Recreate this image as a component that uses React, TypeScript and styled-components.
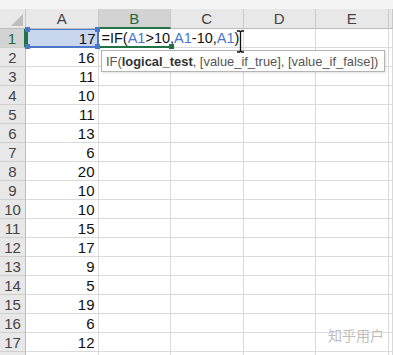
import styled, { createGlobalStyle } from 'styled-components';

const GlobalStyle = createGlobalStyle`
    html, body {
        margin: 0;
        padding: 0;
        background: #ffffff;
        overflow: hidden;
    }
    body {
        font-family: "Liberation Sans", Arial, sans-serif;
    }
`

const values = [17, 16, 11, 10, 11, 13, 6, 20, 10, 10, 15, 17, 9, 5, 19, 6, 12, '']
const columns = ['A', 'B', 'C', 'D', 'E']
const GREEN = '#217346'
const BLUE = '#4a77c9'

export const Sheet = styled.div`
    position: relative;
    width: 393px;
    height: 355px;
    overflow: hidden;
`

export const TopStrip = styled.div`
    height: 9px;
    background: #f4f4f4;
`

export const Grid = styled.div`
    display: grid;
    grid-template-columns: 26px repeat(5, 72.5px) 1fr;
    grid-template-rows: 20px;
    grid-auto-rows: 19px;
`

export const Corner = styled.div`
    position: relative;
    background: #e8e8e8;
    border-right: 1px solid #c9c9c9;
    border-bottom: 1px solid #bcbcbc;
    box-sizing: border-box;

    &::after {
        content: '';
        position: absolute;
        right: 2px;
        bottom: 2px;
        border-left: 12px solid transparent;
        border-bottom: 12px solid #bdbdbd;
    }
`

export const ColHeader = styled.div<{ $active?: boolean }>`
    display: flex;
    align-items: center;
    justify-content: center;
    box-sizing: border-box;
    background: ${p => (p.$active ? '#d3d3d3' : '#e8e8e8')};
    color: ${p => (p.$active ? '#1d6a41' : '#444444')};
    border-right: 1px solid #c9c9c9;
    border-bottom: ${p => (p.$active ? `2px solid ${GREEN}` : '1px solid #bcbcbc')};
    font-size: 15px;
    padding-top: ${p => (p.$active ? '1px' : '0')};
`

export const RowHeader = styled.div<{ $active?: boolean }>`
    display: flex;
    align-items: center;
    justify-content: center;
    box-sizing: border-box;
    background: ${p => (p.$active ? '#d3d3d3' : '#e8e8e8')};
    color: ${p => (p.$active ? '#1d6a41' : '#444444')};
    border-right: ${p => (p.$active ? `2px solid ${GREEN}` : '1px solid #bcbcbc')};
    border-bottom: 1px solid #cfcfcf;
    font-size: 15px;
`

export const Cell = styled.div`
    position: relative;
    display: flex;
    align-items: center;
    justify-content: flex-end;
    box-sizing: border-box;
    padding-right: 3px;
    border-right: 1px solid #dadada;
    border-bottom: 1px solid #dadada;
    font-size: 15px;
    color: #111111;
`

export const RefCell = styled(Cell)`
    background: #c8d6ee;
    border-left: 2px solid ${GREEN};
    border-top: 1px solid ${BLUE};
    border-right: 2px solid ${BLUE};
    border-bottom: 2px solid ${BLUE};
    padding-right: 1px;
`

export const Handle = styled.span<{ $x: 'left' | 'right'; $y: 'top' | 'bottom'; $color?: string }>`
    position: absolute;
    width: 5px;
    height: 5px;
    background: ${p => p.$color || BLUE};
    ${p => p.$x}: -3px;
    ${p => p.$y}: -3px;
    z-index: 3;
`

export const EditCell = styled.div`
    position: relative;
    display: flex;
    align-items: center;
    box-sizing: border-box;
    border-bottom: 2px solid ${GREEN};
    padding-left: 3px;
    font-size: 14.5px;
    color: #111111;
    white-space: nowrap;
    overflow: visible;
    z-index: 2;
`

export const OverflowCell = styled.div`
    box-sizing: border-box;
    border-right: 1px solid #dadada;
    border-bottom: 1px solid #dadada;
`

export const Ref = styled.span`
    color: ${BLUE};
`

export const Tooltip = styled.div`
    position: absolute;
    left: 101px;
    top: 50px;
    width: 284px;
    height: 22px;
    box-sizing: border-box;
    display: flex;
    align-items: center;
    padding: 0 4px;
    background: #ffffff;
    border: 1px solid #b4b4b4;
    box-shadow: 1px 1px 2px rgba(0, 0, 0, 0.12);
    color: #555555;
    font-size: 12.9px;
    white-space: nowrap;
    z-index: 5;

    b {
        color: #333333;
    }
`

export const Cursor = styled.svg`
    position: absolute;
    left: 236px;
    top: 30px;
    z-index: 6;
`

export const Watermark = styled.div`
    position: absolute;
    right: 9px;
    bottom: 10px;
    font-family: "Noto Sans CJK SC", sans-serif;
    font-size: 14px;
    color: #bdbdbd;
    text-shadow: 0 0 1px #ffffff, 0 0 1px #ffffff;
    z-index: 7;
`

export default function App() {
    return (
        <Sheet>
            <GlobalStyle />
            <TopStrip />
            <Grid>
                <Corner />
                {columns.map(c => (
                    <ColHeader key={c} $active={c === 'B'}>{c}</ColHeader>
                ))}
                <ColHeader />
                {values.map((v, i) => {
                    const row = i + 1
                    if (row === 1) {
                        return [
                            <RowHeader key="h1" $active>1</RowHeader>,
                            <RefCell key="a1">
                                {v}
                                <Handle $x="left" $y="top" />
                                <Handle $x="right" $y="top" />
                                <Handle $x="left" $y="bottom" />
                                <Handle $x="right" $y="bottom" />
                            </RefCell>,
                            <EditCell key="b1">
                                =IF(<Ref>A1</Ref>&gt;10,<Ref>A1</Ref>-10,<Ref>A1</Ref>)
                                <Handle $x="right" $y="bottom" $color={GREEN} />
                            </EditCell>,
                            <OverflowCell key="c1" />,
                            <OverflowCell key="d1" />,
                            <OverflowCell key="e1" />,
                            <OverflowCell key="f1" />,
                        ]
                    }
                    return [
                        <RowHeader key={`h${row}`}>{v === '' ? '' : row}</RowHeader>,
                        <Cell key={`a${row}`}>{v}</Cell>,
                        <Cell key={`b${row}`} />,
                        <Cell key={`c${row}`} />,
                        <Cell key={`d${row}`} />,
                        <Cell key={`e${row}`} />,
                        <Cell key={`f${row}`} />,
                    ]
                })}
            </Grid>
            <Tooltip>
                IF(<b>logical_test</b>, [value_if_true], [value_if_false])
            </Tooltip>
            <Cursor width="9" height="23" viewBox="0 0 9 23">
                <path d="M1 1h2.5l1 1 1-1H8M4.5 2v19M1 22h2.5l1-1 1 1H8" stroke="#111" strokeWidth="1.3" fill="none" />
            </Cursor>
            <Watermark>知乎用户</Watermark>
        </Sheet>
    )
}
